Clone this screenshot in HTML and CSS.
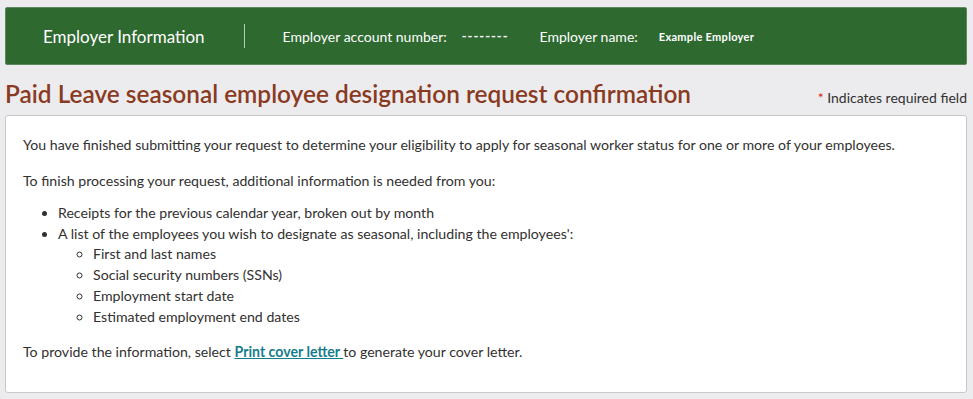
FILE: index.html
```html
<!DOCTYPE html>
<html lang="en">
<head>
  <meta charset="UTF-8" />
  <title>Paid Leave seasonal employee designation request confirmation</title>
  <link rel="stylesheet" href="styles.css">
</head>
<body>

  <!-- Employer banner -->
  <div class="employer-bar">
    <h2>Employer Information</h2>
    <span class="divider"></span>
    <div class="field">
      <span class="field-label">Employer account number:</span>
      <span class="field-value">--------</span>
    </div>
    <div class="field">
      <span class="field-label">Employer name:</span>
      <span class="field-value small">Example Employer</span>
    </div>
  </div>

  <div class="page-head">
    <h1>Paid Leave seasonal employee designation request confirmation</h1>
    <span class="required-note"><span class="asterisk">*</span> Indicates required field</span>
  </div>

  <div class="panel">
    <p>You have finished submitting your request to determine your eligibility to apply for seasonal worker status for one or more of your employees.</p>
    <p class="lead-in">To finish processing your request, additional information is needed from you:</p>
    <ul>
      <li>Receipts for the previous calendar year, broken out by month</li>
      <li>A list of the employees you wish to designate as seasonal, including the employees':
        <ul>
          <li>First and last names</li>
          <li>Social security numbers (SSNs)</li>
          <li>Employment start date</li>
          <li>Estimated employment end dates</li>
        </ul>
      </li>
    </ul>
    <p>To provide the information, select <a href="#">Print cover letter </a>to generate your cover letter.</p>
  </div>

</body>
</html>
```

FILE: styles.css
```css
* {
  margin: 0;
  padding: 0;
  box-sizing: border-box;
}

body {
  background-color: #ececef;
  font-family: Lato, 'Open Sans', sans-serif;
  color: #323130;
  padding: 7px 6px 0 5px;
}

/* Employer banner */
.employer-bar {
  background-color: #2e6930;
  border: 1px solid #5c8a5e;
  border-radius: 2px;
  height: 58px;
  display: flex;
  align-items: center;
  color: #ffffff;
  padding-left: 37px;
}

.employer-bar h2 {
  font-size: 17px;
  font-weight: 400;
}

.divider {
  width: 1px;
  height: 24px;
  background-color: #b9cbb9;
  margin: 0 38px 0 39px;
}

.field {
  display: flex;
  align-items: center;
  margin-right: 31px;
}

.field-label {
  font-size: 14px;
}

.field-value {
  font-weight: 700;
  font-size: 13px;
  letter-spacing: 1px;
  margin-left: 15px;
}

.field-value.small {
  font-size: 11px;
  letter-spacing: 0.3px;
  margin-left: 21px;
}

/* Page heading */
.page-head {
  display: flex;
  justify-content: space-between;
  align-items: baseline;
  margin-top: 14px;
}

h1 {
  color: #8a3a1f;
  font-size: 24.4px;
  font-weight: 600;
}

.required-note {
  font-size: 14px;
}

.asterisk {
  color: #e02020;
}

/* Content panel */
.panel {
  background-color: #ffffff;
  border: 1px solid #c8c8c8;
  border-radius: 3px;
  margin-top: 7px;
  height: 278px;
  padding: 18px 17px;
  font-size: 14.15px;
  line-height: 21px;
}

.panel p {
  margin-bottom: 15px;
}

.panel p.lead-in {
  margin-bottom: 12px;
}

.panel ul {
  list-style: disc;
  padding-left: 35px;
  margin-bottom: 14px;
  line-height: 20.7px;
}

.panel ul ul {
  list-style: circle;
  padding-left: 35px;
  margin-bottom: 0;
}

.panel a {
  color: #167c8c;
  font-weight: 700;
  text-decoration: underline;
}
```
